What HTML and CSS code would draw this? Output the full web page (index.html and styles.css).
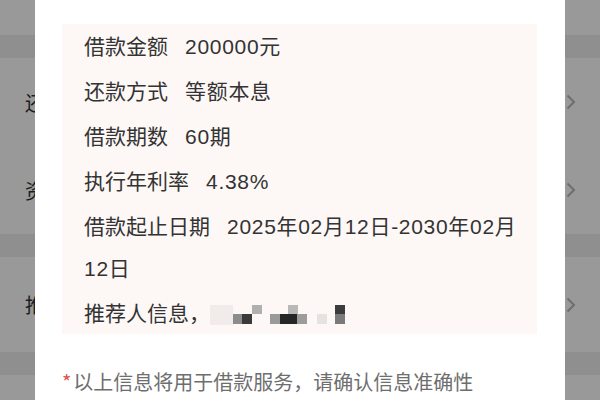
FILE: index.html
```html
<!DOCTYPE html>
<html lang="zh-CN">
<head>
<meta charset="utf-8">
<title>借款信息确认</title>
<link rel="stylesheet" href="styles.css">
</head>
<body>
<div class="page">
  <div class="list">
    <div class="row row-top"></div>
    <div class="band"></div>
    <div class="row"><span class="row-label">还</span><svg class="chev" width="10" height="16" viewBox="0 0 10 16"><polyline points="1.5,1.5 8,8 1.5,14.5" fill="none" stroke="#6e6e6e" stroke-width="2"/></svg></div>
    <div class="row"><span class="row-label">资</span><svg class="chev" width="10" height="16" viewBox="0 0 10 16"><polyline points="1.5,1.5 8,8 1.5,14.5" fill="none" stroke="#6e6e6e" stroke-width="2"/></svg></div>
    <div class="band"></div>
    <div class="row row-tall"><span class="row-label">推</span><svg class="chev" width="10" height="16" viewBox="0 0 10 16"><polyline points="1.5,1.5 8,8 1.5,14.5" fill="none" stroke="#6e6e6e" stroke-width="2"/></svg></div>
    <div class="band"></div>
    <div class="row row-bottom"></div>
  </div>

  <div class="modal">
    <div class="info">
      <div class="line"><span class="k">借款金额</span><span class="v">200000元</span></div>
      <div class="line"><span class="k">还款方式</span><span class="v">等额本息</span></div>
      <div class="line"><span class="k">借款期数</span><span class="v">60期</span></div>
      <div class="line"><span class="k">执行年利率</span><span class="v">4.38%</span></div>
      <div class="line"><span class="k">借款起止日期</span><span class="v">2025年02月12日-2030年02月12日</span></div>
      <div class="line"><span class="k">推荐人信息，</span><svg class="mosaic" width="140" height="24" viewBox="0 0 140 24"><rect x="0" y="3" width="23" height="20" fill="#f1ecea"/><rect x="23" y="12" width="10" height="10" fill="#8c8c8c"/><rect x="32" y="12" width="10" height="10" fill="#3a3a3a"/><rect x="42" y="3" width="10" height="9" fill="#b0b0b0"/><rect x="60" y="12" width="10" height="10" fill="#9a9a9a"/><rect x="70" y="12" width="17" height="10" fill="#262626"/><rect x="87" y="12" width="10" height="10" fill="#9c9c9c"/><rect x="78" y="3" width="10" height="9" fill="#b8b8b8"/><rect x="107" y="12" width="10" height="10" fill="#e6e2e0"/><rect x="125" y="3" width="10" height="9" fill="#3c3c3c"/><rect x="125" y="12" width="10" height="10" fill="#7a7a7a"/></svg></div>
    </div>
    <p class="note"><span class="star">*</span>以上信息将用于借款服务，请确认信息准确性</p>
  </div>
</div>
</body>
</html>
```

FILE: styles.css
```css
* { box-sizing: border-box; }
html, body { margin: 0; padding: 0; }
body {
  width: 600px;
  height: 400px;
  overflow: hidden;
  font-family: "Noto Sans CJK SC", "Noto Sans", sans-serif;
}
.page {
  position: relative;
  width: 600px;
  height: 400px;
  overflow: hidden;
  background: #999999;
}
.list {
  display: flex;
  flex-direction: column;
}
.row {
  height: 88px;
  display: flex;
  align-items: center;
  justify-content: space-between;
  padding: 0 24px 0 25px;
  background: #999999;
  font-size: 20px;
  color: #1c1c1c;
}
.row-top { height: 35px; }
.row-tall { height: 95px; }
.row-bottom { height: 40px; }
.band {
  height: 23px;
  background: #8f8f8f;
}
.chev { display: block; }

.modal {
  position: absolute;
  left: 35px;
  top: 0;
  width: 530px;
  height: 420px;
  background: #ffffff;
  padding: 24px 28px 0 27px;
}
.info {
  background: #fdf8f6;
  padding: 0 10px 1px 22px;
  color: #333333;
  font-size: 21px;
}
.line {
  line-height: 42px;
  margin-bottom: 3px;
}
.line:last-child { margin-bottom: 0; }
.v {
  margin-left: 17px;
  font-family: "Liberation Sans", "Noto Sans CJK SC", sans-serif;
  letter-spacing: 0.7px;
  line-height: 21px;
}
.mosaic {
  display: inline-block;
  vertical-align: -5px;
}
.note {
  margin: 34px 0 0 0;
  font-size: 20px;
  line-height: 28px;
  color: #6e6e6e;
}
.star {
  color: #e0524a;
  margin-right: 2px;
}
```
